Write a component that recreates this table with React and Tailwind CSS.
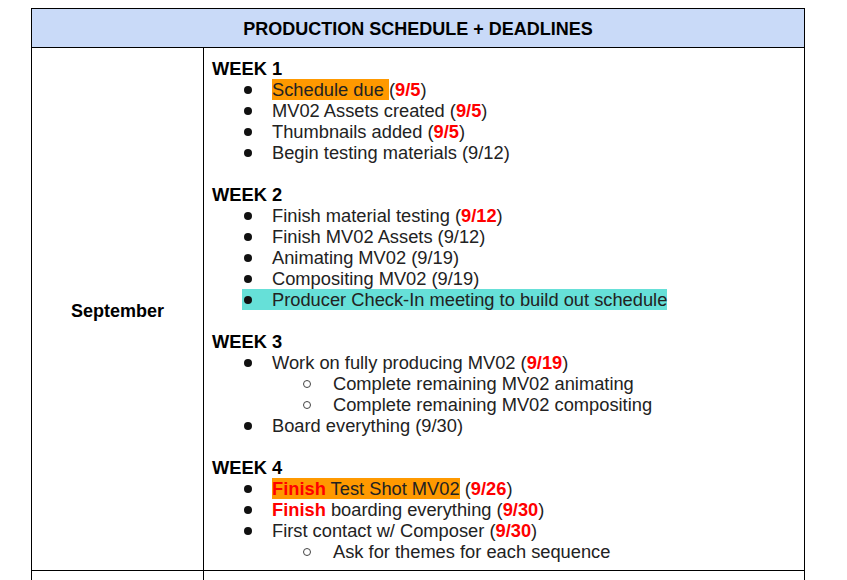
import React from "react";

const font = { fontFamily: '"Liberation Sans", Arial, sans-serif' };

function Red({ children }) {
    return <span className="font-bold text-[#ff0000]">{children}</span>;
}

function Week({ label }) {
    return <div className="h-[21px] font-bold text-black">{label}</div>;
}

function Blank() {
    return <div className="h-[21px]"></div>;
}

function Item({ children, highlight }) {
    return (
        <div className="flex h-[21px] pl-[30px]">
            <div className={`flex h-[21px] items-center ${highlight || ""}`}>
                <span className="w-[30px] flex items-center">
                    <span className="ml-[2px] w-[8px] h-[8px] rounded-full bg-[#111]"></span>
                </span>
                <span className="whitespace-pre">{children}</span>
            </div>
        </div>
    );
}

function SubItem({ children }) {
    return (
        <div className="h-[21px] pl-[91px] flex items-center">
            <span className="w-[30px] flex items-center">
                <span className="w-[8px] h-[8px] rounded-full border border-[#444]"></span>
            </span>
            <span className="whitespace-pre">{children}</span>
        </div>
    );
}

export default function App() {
    return (
        <div className="w-[847px] h-[580px] overflow-hidden bg-white pt-[8px] pl-[31px]" style={font}>
            <div className="w-[774px] border border-black text-[18.3px] leading-[21px] text-[#222]">
                {/* Header */}
                <div className="h-[39px] pt-[2px] bg-[#c9daf8] border-b border-black flex items-center justify-center font-bold text-black text-[18px]">
                    PRODUCTION SCHEDULE + DEADLINES
                </div>

                {/* September row */}
                <div className="flex border-b border-black">
                    <div className="w-[172px] pt-[5px] border-r border-black flex items-center justify-center font-bold text-black text-[18px]">
                        September
                    </div>
                    <div className="flex-1 pl-[8px] pt-[10px] pb-[8px]">
                        <Week label="WEEK 1" />
                        <Item><span className="bg-[#ff9900]">Schedule due </span>(<Red>9/5</Red>)</Item>
                        <Item>MV02 Assets created (<Red>9/5</Red>)</Item>
                        <Item>Thumbnails added (<Red>9/5</Red>)</Item>
                        <Item>Begin testing materials (9/12)</Item>
                        <Blank />

                        <Week label="WEEK 2" />
                        <Item>Finish material testing (<Red>9/12</Red>)</Item>
                        <Item>Finish MV02 Assets (9/12)</Item>
                        <Item>Animating MV02 (9/19)</Item>
                        <Item>Compositing MV02 (9/19)</Item>
                        <Item highlight="bg-[#66e0d8]">Producer Check-In meeting to build out schedule</Item>
                        <Blank />

                        <Week label="WEEK 3" />
                        <Item>Work on fully producing MV02 (<Red>9/19</Red>)</Item>
                        <SubItem>Complete remaining MV02 animating</SubItem>
                        <SubItem>Complete remaining MV02 compositing</SubItem>
                        <Item>Board everything (9/30)</Item>
                        <Blank />

                        <Week label="WEEK 4" />
                        <Item><span className="bg-[#ff9900]"><Red>Finish</Red> Test Shot MV02</span> (<Red>9/26</Red>)</Item>
                        <Item><Red>Finish</Red> boarding everything (<Red>9/30</Red>)</Item>
                        <Item>First contact w/ Composer (<Red>9/30</Red>)</Item>
                        <SubItem>Ask for themes for each sequence</SubItem>
                    </div>
                </div>

                {/* Next row (cut off) */}
                <div className="flex h-[60px]">
                    <div className="w-[172px] border-r border-black"></div>
                    <div className="flex-1"></div>
                </div>
            </div>
        </div>
    );
}
